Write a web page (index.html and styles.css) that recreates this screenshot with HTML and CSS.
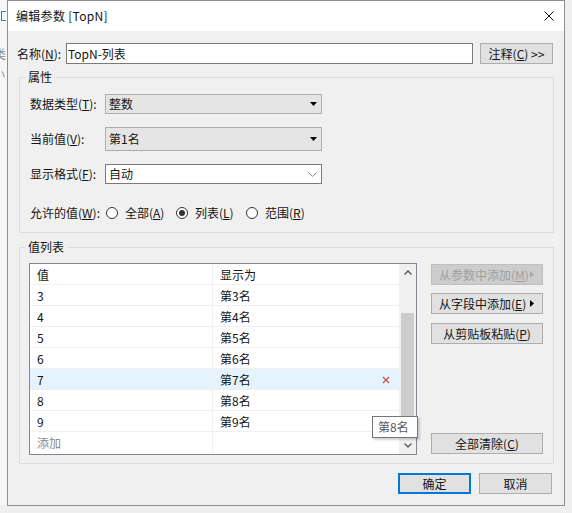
FILE: index.html
```html
<!DOCTYPE html>
<html lang="zh-CN">
<head>
<meta charset="utf-8">
<title>编辑参数 [TopN]</title>
<link rel="stylesheet" href="styles.css">
</head>
<body>
<div class="desk">
  <div class="bgapp">
    <span class="bg-icon"></span>
    <span class="bg-t1">类</span>
    <span class="bg-t2">小</span>
  </div>
  <div class="dialog">
    <div class="titlebar">
      <span class="title">编辑参数 [TopN]</span>
      <span class="close"><svg width="10" height="10" viewBox="0 0 10 10"><path d="M0.5 0.5L9.5 9.5M9.5 0.5L0.5 9.5" stroke="#111" stroke-width="1" fill="none"/></svg></span>
    </div>
    <div class="content">
      <div class="name-row">
        <span class="name-label">名称(<u>N</u>):</span>
        <div class="textbox">TopN-列表</div>
        <button class="btn btn-note">注释(<u>C</u>) &gt;&gt;</button>
      </div>

      <fieldset class="group group-props">
        <legend>属性</legend>
        <div class="props-body">
          <div class="prow r1">
            <span class="lbl">数据类型(<u>T</u>):</span>
            <div class="combo combo-ro"><span>整数</span><svg width="7" height="4" viewBox="0 0 7 4"><path d="M0 0H7L3.5 4Z" fill="#000"/></svg></div>
          </div>
          <div class="prow r2">
            <span class="lbl">当前值(<u>V</u>):</span>
            <div class="combo combo-ro"><span>第1名</span><svg width="7" height="4" viewBox="0 0 7 4"><path d="M0 0H7L3.5 4Z" fill="#000"/></svg></div>
          </div>
          <div class="prow r3">
            <span class="lbl">显示格式(<u>F</u>):</span>
            <div class="combo combo-edit"><span>自动</span><svg width="9" height="5" viewBox="0 0 9 5"><path d="M0.5 0.5L4.5 4.5L8.5 0.5" fill="none" stroke="#8a8a8a" stroke-width="1"/></svg></div>
          </div>
          <div class="prow r4">
            <span class="lbl lbl-radio">允许的值(<u>W</u>):</span>
            <div class="radio"><span class="dot"></span><span>全部(<u>A</u>)</span></div>
            <div class="radio"><span class="dot on"></span><span>列表(<u>L</u>)</span></div>
            <div class="radio"><span class="dot"></span><span>范围(<u>R</u>)</span></div>
          </div>
        </div>
      </fieldset>

      <fieldset class="group group-list">
        <legend>值列表</legend>
        <div class="list-body">
          <div class="listbox">
            <div class="grid">
              <div class="grow"><span class="c1">值</span><span class="c2">显示为</span></div>
              <div class="grow"><span class="c1">3</span><span class="c2">第3名</span></div>
              <div class="grow"><span class="c1">4</span><span class="c2">第4名</span></div>
              <div class="grow"><span class="c1">5</span><span class="c2">第5名</span></div>
              <div class="grow"><span class="c1">6</span><span class="c2">第6名</span></div>
              <div class="grow sel"><span class="c1">7</span><span class="c2"><span>第7名</span><svg class="del" width="8" height="8" viewBox="0 0 8 8"><path d="M1 1L7 7M7 1L1 7" stroke="#c8553f" stroke-width="1.3" fill="none"/></svg></span></div>
              <div class="grow"><span class="c1">8</span><span class="c2">第8名</span></div>
              <div class="grow"><span class="c1">9</span><span class="c2">第9名</span></div>
              <div class="grow add"><span class="c1">添加</span><span class="c2"></span></div>
            </div>
            <div class="vscroll">
              <div class="sbtn"><svg width="8" height="5" viewBox="0 0 8 5"><path d="M0.5 4.5L4 1L7.5 4.5" fill="none" stroke="#555" stroke-width="1.3"/></svg></div>
              <div class="track"><div class="thumb"></div></div>
              <div class="sbtn"><svg width="8" height="5" viewBox="0 0 8 5"><path d="M0.5 0.5L4 4L7.5 0.5" fill="none" stroke="#555" stroke-width="1.3"/></svg></div>
            </div>
            <div class="tooltip">第8名</div>
          </div>
          <div class="side">
            <button class="btn btn-side btn-dis"><span>从参数中添加(<u>M</u>)</span><svg width="4" height="7" viewBox="0 0 4 7"><path d="M0 0L4 3.5L0 7Z" fill="#a9a9a9"/></svg></button>
            <button class="btn btn-side b2"><span>从字段中添加(<u>E</u>)</span><svg width="4" height="7" viewBox="0 0 4 7"><path d="M0 0L4 3.5L0 7Z" fill="#000"/></svg></button>
            <button class="btn btn-side-c b3">从剪贴板粘贴(<u>P</u>)</button>
            <button class="btn btn-side-c b4">全部清除(<u>C</u>)</button>
          </div>
        </div>
      </fieldset>

      <div class="footer">
        <button class="btn btn-foot btn-default">确定</button>
        <button class="btn btn-foot">取消</button>
      </div>
    </div>
  </div>
</div>
</body>
</html>
```

FILE: styles.css
```css
* { box-sizing: border-box; }
html, body { margin: 0; padding: 0; }
body {
  width: 572px;
  height: 513px;
  overflow: hidden;
  background: #efefef;
  font-family: "Noto Sans CJK SC", "Noto Sans", sans-serif;
  font-size: 12px;
  line-height: 14px;
  color: #141414;
}
u { text-decoration: underline; text-underline-offset: 1px; }

.desk { display: flex; height: 513px; }

.bgapp {
  flex: none;
  width: 7px;
  height: 505px;
  overflow: hidden;
  background: #f6f6f6;
  display: flex;
  flex-direction: column;
  color: #8c8c8c;
}
.bg-icon {
  display: block;
  width: 5px;
  height: 10px;
  margin-top: 11px;
  margin-left: 1px;
  border: 1px solid #2f7fd8;
  border-right: none;
}
.bg-t1 { margin-top: 26px; margin-left: -6px; white-space: nowrap; }
.bg-t2 { margin-top: 6px; margin-left: -7px; white-space: nowrap; }

.dialog {
  flex: none;
  width: 558px;
  height: 506px;
  border: 1px solid #8f8f8f;
  background: #f0f0f0;
  display: flex;
  flex-direction: column;
}

.titlebar {
  height: 30px;
  background: #fff;
  display: flex;
  align-items: center;
  justify-content: space-between;
  padding: 0 10px 0 8px;
  flex: none;
}
.title { font-size: 12px; letter-spacing: 0.3px; }
.close { display: flex; }

.content {
  flex: 1;
  display: flex;
  flex-direction: column;
  padding: 12px 10px 0 11px;
}

.name-row {
  display: flex;
  align-items: center;
  height: 21px;
  margin-left: -2px;
}
.name-label { width: 49px; flex: none; }
.textbox {
  width: 407px;
  height: 21px;
  border: 1px solid #7a7a7a;
  background: #fff;
  padding-left: 1px;
  line-height: 19px;
}

.btn {
  height: 21px;
  border: 1px solid #adadad;
  background: #e1e1e1;
  font: inherit;
  color: #141414;
  padding: 0;
  margin: 0;
  display: flex;
  align-items: center;
  justify-content: center;
}
.btn-note { width: 73px; margin-left: 7px; }

.group {
  margin: 6px 0 0;
  padding: 0;
  border: 1px solid #dcdcdc;
  min-width: 0;
}
.group legend {
  margin-left: 5px;
  padding: 0 3px;
  line-height: 14px;
  font-size: 12px;
}

.props-body { padding: 0 10px 11px 10px; }
.prow { display: flex; align-items: center; }
.r1 { margin-top: 10px; height: 20px; }
.r2 { margin-top: 13px; height: 24px; }
.r3 { margin-top: 13px; height: 20px; }
.r4 { margin-top: 21px; height: 16px; }
.lbl { width: 75px; flex: none; }
.lbl-radio { width: 76px; }

.combo {
  width: 217px;
  height: 100%;
  display: flex;
  align-items: center;
  justify-content: space-between;
  padding: 0 4px 0 3px;
}
.combo-ro { background: #e5e5e5; border: 1px solid #adadad; }
.combo-edit { background: #fff; border: 1px solid #7a7a7a; padding-right: 4px; }

.radio {
  display: flex;
  align-items: center;
  gap: 7px;
  width: 70px;
}
.dot {
  width: 12px;
  height: 12px;
  border: 1px solid #333;
  border-radius: 50%;
  background: #fff;
  display: flex;
  align-items: center;
  justify-content: center;
  flex: none;
}
.dot.on::after {
  content: "";
  width: 6px;
  height: 6px;
  border-radius: 50%;
  background: #333;
}

.group-list { margin-top: 7px; }
.list-body {
  display: flex;
  padding: 9px 0 8px 9px;
}
.listbox {
  position: relative;
  width: 388px;
  height: 192px;
  border: 1px solid #828790;
  background: #fff;
  display: flex;
  flex: none;
}
.grid { flex: 1; display: flex; flex-direction: column; }
.grow {
  height: 21px;
  display: flex;
  border-bottom: 1px solid #f0f0f0;
}
.grow:last-child { border-bottom: none; }
.c1 {
  width: 183px;
  border-right: 1px solid #f0f0f0;
  padding: 1px 0 0 7px;
  line-height: 20px;
  flex: none;
}
.c2 {
  flex: 1;
  padding: 1px 9px 0 7px;
  line-height: 20px;
  display: flex;
  align-items: center;
  justify-content: space-between;
}
.sel { background: #e5f3ff; }
.add .c1 { color: #8a8a8a; }

.vscroll {
  width: 17px;
  flex: none;
  background: #f0f0f0;
  display: flex;
  flex-direction: column;
}
.sbtn {
  height: 17px;
  display: flex;
  align-items: center;
  justify-content: center;
  flex: none;
}
.track { flex: 1; display: flex; flex-direction: column; padding: 32px 2px 0; }
.thumb { flex: 1; background: #cdcdcd; }

.tooltip {
  position: absolute;
  left: 342px;
  top: 152px;
  width: 46px;
  height: 22px;
  background: #fff;
  border: 1px solid #767676;
  color: #575757;
  padding-left: 5px;
  line-height: 20px;
  box-shadow: 2px 2px 2px rgba(0,0,0,0.18);
}

.side {
  display: flex;
  flex-direction: column;
  margin-left: 14px;
  width: 112px;
}
.btn-side { justify-content: space-between; padding: 0 8px 0 7px; width: 112px; }
.btn-side-c { width: 112px; }
.btn-dis { margin-top: 1px; background: #cccccc; border-color: #bfbfbf; color: #a0a0a0; }
.b2 { margin-top: 8px; }
.b3 { margin-top: 9px; }
.b4 { margin-top: auto; margin-bottom: 1px; }

.footer {
  display: flex;
  justify-content: flex-end;
  gap: 8px;
  margin-top: 9px;
  padding-right: 2px;
}
.btn-foot { width: 73px; }
.btn-default { border-color: #0078d7; box-shadow: inset 0 0 0 1px #0078d7; }
```
